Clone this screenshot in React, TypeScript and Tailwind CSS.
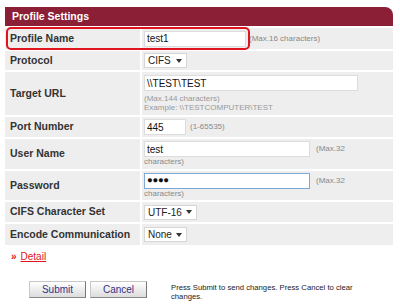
import React from "react";

const font = { fontFamily: '"Liberation Sans", Tahoma, Arial, sans-serif' };

function Row({ label, children, h }: { label: string; children: React.ReactNode; h: string }) {
  return (
    <div className={`flex gap-[2px] ${h}`}>
      <div className="w-[135px] shrink-0 bg-[#eeeeee] flex items-center pl-[5px] text-[10.5px] font-bold text-[#333] whitespace-nowrap">
        {label}
      </div>
      <div className="flex-1 bg-[#eeeeee] flex flex-col justify-center pl-[2px]">{children}</div>
    </div>
  );
}

function Select({ value, w }: { value: string; w: string }) {
  return (
    <div className={`${w} h-[15px] bg-white border border-[#d6d6d6] flex items-center justify-between pl-[3px] pr-[4px] text-[10px] text-[#222] whitespace-nowrap`}>
      <span>{value}</span>
      <svg width="6" height="4" viewBox="0 0 6 4"><path d="M0 0h6L3 4z" fill="#333" /></svg>
    </div>
  );
}

function Input({ value, w, focus }: { value: React.ReactNode; w: string; focus?: boolean }) {
  return (
    <div
      className={`${w} h-[16px] bg-white border ${focus ? "border-[#7ea8d6]" : "border-[#dcdcdc]"} flex items-center pl-[2px] text-[10px] text-[#111] whitespace-nowrap`}
    >
      {value}
    </div>
  );
}

export default function App() {
  return (
    <div className="w-[400px] h-[306px] bg-white relative overflow-hidden" style={font}>
      <div className="pt-[7px] pl-[5px] w-[393px]">
        <div className="h-[19px] bg-[#8a1f36] rounded-tr-[8px] flex items-center pl-[7px] text-[10.5px] font-bold text-white">
          Profile Settings
        </div>
        <div className="flex flex-col gap-[2px] mt-[2px]">
          <div className="relative">
            <Row label="Profile Name" h="h-[21px]">
              <div className="flex items-center">
                <Input value="test1" w="w-[102px]" />
                <span className="ml-[3px] text-[8px] text-[#888] whitespace-nowrap">(Max.16 characters)</span>
              </div>
            </Row>
            <div className="absolute left-[1px] top-[-1px] w-[244px] h-[23px] border-2 border-[#e0141e] rounded-[5px]" />
          </div>
          <Row label="Protocol" h="h-[19px]">
            <Select value="CIFS" w="w-[43px]" />
          </Row>
          <Row label="Target URL" h="h-[43px]">
            <Input value="\\TEST\TEST" w="w-[214px]" />
            <div className="mt-[3px] text-[8px] leading-[9px] text-[#999]">(Max.144 characters)</div>
            <div className="text-[8px] leading-[9px] text-[#999]">Example: \\TESTCOMPUTER\TEST</div>
          </Row>
          <Row label="Port Number" h="h-[20px]">
            <div className="flex items-center">
              <Input value="445" w="w-[42px]" />
              <span className="ml-[4px] text-[8px] text-[#888]">(1-65535)</span>
            </div>
          </Row>
          <Row label="User Name" h="h-[30px]">
            <div className="flex items-center">
              <Input value="test" w="w-[166px]" />
              <span className="ml-[6px] text-[8px] text-[#888]">(Max.32</span>
            </div>
            <div className="text-[8px] leading-[10px] text-[#888]">characters)</div>
          </Row>
          <Row label="Password" h="h-[29px]">
            <div className="flex items-center">
              <Input value={<span className="text-[9.5px] tracking-[-0.3px]">●●●●</span>} w="w-[166px]" focus />
              <span className="ml-[6px] text-[8px] text-[#888]">(Max.32</span>
            </div>
            <div className="text-[8px] leading-[10px] text-[#888]">characters)</div>
          </Row>
          <Row label="CIFS Character Set" h="h-[20px]">
            <Select value="UTF-16" w="w-[53px]" />
          </Row>
          <Row label="Encode Communication" h="h-[21px]">
            <Select value="None" w="w-[43px]" />
          </Row>
        </div>
        <div className="mt-[5px] pl-[6px] flex items-center text-[10px] leading-[14px]">
          <span className="text-[#e0141e] font-bold text-[10px] mr-[4px]">»</span>
          <span className="text-[#e0141e] underline">Detail</span>
        </div>
        <div className="mt-[17px] flex items-start">
          <div className="ml-[24px] flex gap-[4px]">
            <button className="w-[57px] h-[17px] text-[10px] text-[#333388] bg-gradient-to-b from-white to-[#dcdcdc] border border-[#c8c8c8] border-r-[#777] border-b-[#888]">
              Submit
            </button>
            <button className="w-[57px] h-[17px] text-[10px] text-[#333388] bg-gradient-to-b from-white to-[#dcdcdc] border border-[#c8c8c8] border-r-[#777] border-b-[#888]">
              Cancel
            </button>
          </div>
          <div className="ml-[24px] mt-[2px] text-[7.7px] leading-[9px] text-[#222] w-[212px]">
            Press Submit to send changes. Press Cancel to clear changes.
          </div>
        </div>
      </div>
    </div>
  );
}
